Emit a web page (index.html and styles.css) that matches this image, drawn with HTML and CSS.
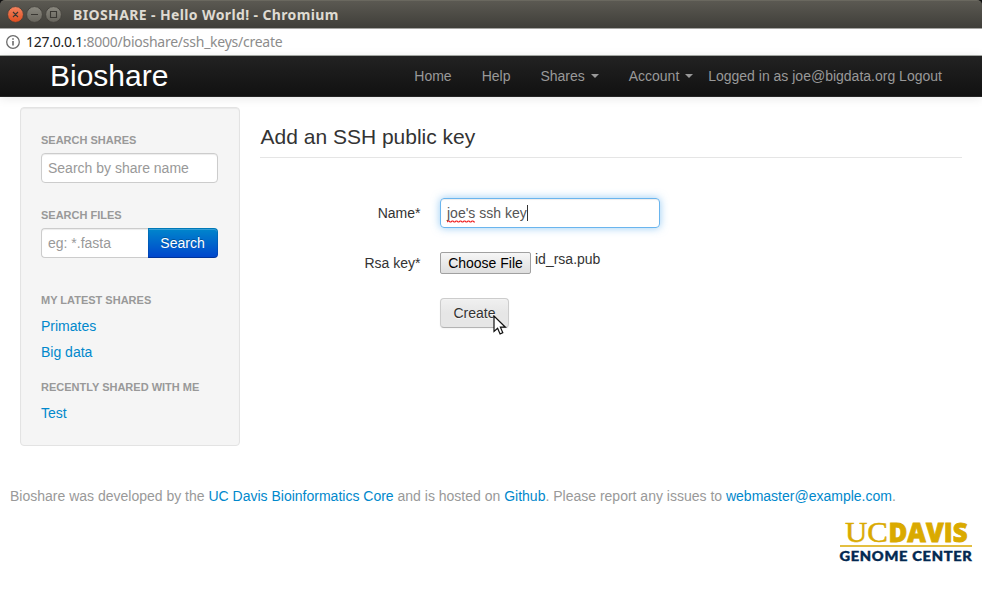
FILE: index.html
```html
<!DOCTYPE html>
<html lang="en">
<head>
<meta charset="utf-8">
<title>BIOSHARE - Hello World!</title>
<link rel="stylesheet" href="styles.css">
</head>
<body>
<div class="frame">
<header class="titlebar">
  <svg class="controls" width="60" height="28" viewBox="0 0 60 28">
    <defs>
      <linearGradient id="close" x1="0" y1="0" x2="0" y2="1"><stop offset="0" stop-color="#f48460"/><stop offset="1" stop-color="#df4d1e"/></linearGradient>
      <linearGradient id="plain" x1="0" y1="0" x2="0" y2="1"><stop offset="0" stop-color="#8b8980"/><stop offset="1" stop-color="#66645c"/></linearGradient>
    </defs>
    <g stroke="#403e39" stroke-width=".8">
      <circle cx="10.5" cy="14.5" r="7.9" fill="url(#close)"/>
      <circle cx="29.5" cy="14.5" r="7.9" fill="url(#plain)"/>
      <circle cx="48.5" cy="14.5" r="7.9" fill="url(#plain)"/>
    </g>
    <g stroke="#3a3833" fill="none" stroke-width="1.1">
      <path d="M8 12l5 5M13 12l-5 5M26 14.5h7M45.5 11.5h6v6h-6z"/>
    </g>
  </svg>
  <span class="window-title">BIOSHARE - Hello World! - Chromium</span>
</header>
</div>
<div class="address">
  <svg width="16" height="16" viewBox="0 0 16 16"><circle cx="8" cy="8" r="6.3" fill="none" stroke="#6b6b6b" stroke-width="1.3"/><path d="M8 7v4.5M8 4.2v1.6" stroke="#6b6b6b" stroke-width="1.6"/></svg>
  <span class="url"><b>127.0.0.1</b>:8000/bioshare/ssh_keys/create</span>
</div>
<nav class="navbar">
  <a class="brand">Bioshare</a>
  <ul class="menu">
    <li>Home</li>
    <li>Help</li>
    <li>Shares <i class="caret"></i></li>
    <li>Account <i class="caret"></i></li>
  </ul>
  <span class="login">Logged in as joe@bigdata.org Logout</span>
</nav>
<div class="page">
  <aside class="sidebar">
    <h6>Search shares</h6>
    <input class="field" type="text" placeholder="Search by share name">
    <h6 class="files-head">Search files</h6>
    <div class="append">
      <input class="field" type="text" placeholder="eg: *.fasta"><button class="btn-primary">Search</button>
    </div>
    <h6 class="latest-head">My latest shares</h6>
    <a class="share">Primates</a>
    <a class="share">Big data</a>
    <h6 class="recent-head">Recently shared with me</h6>
    <a class="share">Test</a>
  </aside>
  <main class="content">
    <h1>Add an SSH public key</h1>
    <div class="row">
      <label>Name*</label>
      <div class="focused"><span class="misspelt">joe's<svg class="squiggle" width="29" height="3" viewBox="0 0 29 3"><path d="M0 2l1-1 1 0 1 1 1 0 1-1 1 0 1 1 1 0 1-1 1 0 1 1 1 0 1-1 1 0 1 1 1 0 1-1 1 0 1 1 1 0 1-1 1 0 1 1 1 0 1-1 1 0 1 1 1 0" fill="none" stroke="#f02020" stroke-width="1.1"/></svg></span>&nbsp;ssh key<i class="text-cursor"></i></div>
    </div>
    <div class="row file-row">
      <label>Rsa key*</label>
      <button class="choose">Choose File</button><span class="filename">id_rsa.pub</span>
    </div>
    <div class="row submit-row">
      <button class="create">Create<svg class="pointer" width="14" height="21" viewBox="0 0 14 21"><path d="M1 1v15.5l3.6-3.3 2.5 5.7 2.7-1.2-2.4-5.5h5z" fill="#fff" stroke="#111" stroke-width="1.2"/></svg></button>
    </div>
  </main>
</div>
<footer>
  <p>Bioshare was developed by the <a>UC Davis Bioinformatics Core</a> and is hosted on <a>Github</a>. Please report any issues to <a>webmaster@example.com</a>.</p>
  <svg class="logo" width="134" height="60" viewBox="0 -12 134 60">
    <text class="logo-uc" x="6" y="20.5" textLength="43" lengthAdjust="spacingAndGlyphs">UC</text>
    <text class="logo-davis" x="49.5" y="20.5" textLength="79" lengthAdjust="spacingAndGlyphs">DAVIS</text>
    <path d="M1 25h132" stroke="#daaa00" stroke-width="1.3"/>
    <text class="logo-center" x="0.5" y="40" textLength="133" lengthAdjust="spacingAndGlyphs">GENOME CENTER</text>
  </svg>
</footer>
</body>
</html>
```
FILE: styles.css
```css
* { box-sizing: border-box; }
body {
  margin: 0;
  background: #fff;
  color: #333;
  font: 14px/20px "Liberation Sans", Arial, sans-serif;
}
a { color: #08c; }
button, input { font: inherit; }
.frame { background: #111; }
.titlebar {
  display: flex;
  height: 28px;
  padding-left: 5px;
  background: linear-gradient(#5b5952, #3f3e39);
  border-top: 1px solid #6a685f;
  border-radius: 5px 5px 0 0;
}
.controls { margin-top: -1px; flex: none; }
.window-title {
  margin-left: 8px;
  color: #dfdbd2;
  font: bold 14px/27px "Noto Sans", sans-serif;
  letter-spacing: 0.38px;
}
.address {
  display: flex;
  align-items: center;
  height: 28px;
  padding-left: 5px;
  border-top: 1px solid #a5a5a2;
  border-bottom: 1px solid #a9ada8;
}
.url {
  margin-left: 5px;
  color: #8c8c8c;
  font: 14px/26px "Noto Sans", sans-serif;
  letter-spacing: -0.25px;
}
.url b { color: #222; font-weight: normal; }
.navbar {
  display: flex;
  height: 41px;
  padding-left: 50px;
  background: linear-gradient(#222, #111);
  border-bottom: 1px solid #252525;
  box-shadow: 0 1px 10px rgba(0,0,0,.1);
  color: #999;
}
.brand { width: 364.3px; color: #fff; font-size: 30px; line-height: 40px; }
.menu { display: flex; gap: 30px; margin: 0; padding: 0; list-style: none; line-height: 40px; }
.caret {
  display: inline-block;
  margin: 0 0 3px 2px;
  border: 4px solid transparent;
  border-top-color: #999;
  border-bottom: 0;
  vertical-align: middle;
}
.login { margin-left: 15px; line-height: 40px; }
.page { display: flex; gap: 20px; padding: 10px 20px 0; }
.sidebar {
  width: 220px;
  height: 339px;
  padding: 22px 20px 0;
  background: #f5f5f5;
  border: 1px solid #e3e3e3;
  border-radius: 4px;
  box-shadow: inset 0 1px 1px rgba(0,0,0,.05);
}
h6 {
  margin: 0 0 3px;
  color: #999;
  font-size: 11px;
  line-height: 20px;
  text-transform: uppercase;
}
.field {
  display: block;
  width: 177px;
  height: 30px;
  padding: 4px 6px;
  border: 1px solid #ccc;
  border-radius: 4px;
  background: #fff;
  box-shadow: inset 0 1px 1px rgba(0,0,0,.075);
}
.field::placeholder { color: #999; opacity: 1; }
.files-head { margin-top: 22px; }
.append { display: flex; width: 177px; }
.append .field { width: 107px; border-right: 0; border-radius: 4px 0 0 4px; }
.btn-primary {
  width: 70px;
  height: 30px;
  padding: 0 1px 0 0;
  color: #fff;
  background: linear-gradient(#08c, #04c) border-box;
  border: 1px solid;
  border-color: rgba(0,0,0,.1) rgba(0,0,0,.1) rgba(0,0,0,.25);
  border-radius: 0 4px 4px 0;
  box-shadow: inset 0 1px 0 rgba(255,255,255,.2);
  text-shadow: 0 -1px 0 rgba(0,0,0,.25);
}
.latest-head { margin-top: 32px; }
.share { display: block; line-height: 26px; }
.recent-head { margin-top: 12px; }
.content { width: 702px; }
h1 {
  height: 51px;
  margin: 0 0 40px;
  padding-left: 0.5px;
  border-bottom: 1px solid #e5e5e5;
  font-size: 21px;
  font-weight: normal;
  line-height: 60px;
}
.row { display: flex; height: 30px; }
label { width: 160.5px; margin-right: 19.5px; line-height: 30px; text-align: right; }
.focused {
  display: flex;
  width: 220px;
  padding: 4px 6px;
  color: #555;
  border: 1px solid #6ab5ee;
  border-radius: 4px;
  box-shadow: inset 0 1px 1px rgba(0,0,0,.075), 0 0 8px rgba(82,168,236,.6);
}
.misspelt { position: relative; }
.squiggle { position: absolute; left: 0; bottom: 0; }
.text-cursor { width: 1px; height: 16px; margin-top: 2px; background: #333; }
.file-row { margin-top: 20px; }
.choose {
  width: 91px;
  height: 22px;
  margin-top: 4px;
  padding: 0;
  color: #000;
  background: linear-gradient(#f6f6f6, #dedede);
  border: 1px solid #a0a0a0;
  border-radius: 2px;
}
.filename { margin-left: 4px; line-height: 22px; }
.submit-row { margin: 20px 0 0 180px; }
.create {
  position: relative;
  width: 69px;
  padding: 0;
  color: #333;
  background: linear-gradient(#f0f0f0, #e6e6e6 50%);
  border: 1px solid #ccc;
  border-bottom-color: #b3b3b3;
  border-radius: 4px;
  box-shadow: inset 0 1px 0 rgba(255,255,255,.2), 0 1px 2px rgba(0,0,0,.05);
  text-shadow: 0 1px 1px rgba(255,255,255,.75);
}
.pointer { position: absolute; left: 52px; top: 16px; }
footer { padding: 40px 9px 0 10px; color: #999; }
footer p { margin: 0; }
.logo { display: block; margin: 3px 0 0 auto; }
.logo-uc { fill: #daaa00; stroke: #daaa00; stroke-width: .5; font: 29px "Liberation Serif", serif; }
.logo-davis { fill: #daaa00; stroke: #daaa00; stroke-width: .8; font: 800 26.5px "Open Sans", sans-serif; }
.logo-center { fill: #022851; stroke: #022851; stroke-width: .4; font: 900 12.5px Lato, sans-serif; letter-spacing: .6px; }
```
